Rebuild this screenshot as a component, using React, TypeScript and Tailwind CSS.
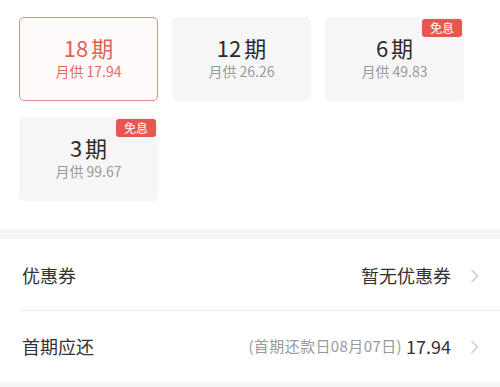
import React from "react";

const font = { fontFamily: '"Noto Sans CJK SC", "Noto Sans", sans-serif' };

function Chevron() {
  return (
    <svg width="9" height="14" viewBox="0 0 9 14" className="ml-[19px]">
      <polyline points="1.5,1 7.5,7 1.5,13" fill="none" stroke="#c8c8c8" strokeWidth="1.2" />
    </svg>
  );
}

type Plan = { n: string; m: string; free?: boolean; selected?: boolean };

const plans: Plan[] = [
  { n: "18", m: "17.94", selected: true },
  { n: "12", m: "26.26" },
  { n: "6", m: "49.83", free: true },
  { n: "3", m: "99.67", free: true },
];

function Card({ p }: { p: Plan }) {
  return (
    <div
      className={
        p.selected
          ? "relative h-[84px] rounded-[5px] border-[1.5px] border-[#e58a85] bg-[#fffafa] flex flex-col items-center justify-center pb-[3px]"
          : "relative h-[84px] rounded-[5px] bg-[#f6f6f6] flex flex-col items-center justify-center pb-[3px]"
      }
    >
      {p.free && (
        <div className="absolute right-[2px] top-[2px] h-[18px] w-[40px] rounded-[3px] bg-[#e8574f] text-white text-[12px] leading-[18px] text-center">
          免息
        </div>
      )}
      <div
        className={
          p.selected
            ? "text-[22px] leading-[26px] text-[#df5f59]"
            : "text-[22px] leading-[26px] text-[#2b2b2b]"
        }
      >
        {p.n}
        <span className="ml-[3px]">期</span>
      </div>
      <div
        className={
          p.selected
            ? "mt-[1px] text-[14px] leading-[21px] text-[#df6a64]"
            : "mt-[1px] text-[14px] leading-[21px] text-[#9a9a9a]"
        }
      >
        月供 {p.m}
      </div>
    </div>
  );
}

export default function App() {
  return (
    <div className="w-[500px] h-[387px] bg-white overflow-hidden" style={font}>
      <div className="pt-[17px] pl-[19px] pb-[28px]">
        <div className="grid grid-cols-[139px_139px_139px] gap-x-[14px] gap-y-[16px]">
          {plans.map((p) => (
            <Card key={p.n} p={p} />
          ))}
        </div>
      </div>
      <div className="h-[10px] bg-[#f5f5f5]" />
      <div className="h-[71px] flex items-center pl-[22px] pr-[21px] pt-[2px]">
        <div className="text-[18px] text-[#333]">优惠券</div>
        <div className="ml-auto text-[18px] text-[#333]">暂无优惠券</div>
        <Chevron />
      </div>
      <div className="ml-[20px] h-px bg-[#ececec]" />
      <div className="h-[71px] flex items-center pl-[22px] pr-[21px]">
        <div className="text-[18px] text-[#333]">首期应还</div>
        <div className="ml-auto flex items-center">
          <span className="text-[15px] tracking-[0.4px] text-[#9a9a9a]">(首期还款日08月07日)</span>
          <span className="ml-[4px] text-[18px] text-[#333]">17.94</span>
        </div>
        <Chevron />
      </div>
      <div className="h-[10px] bg-[#f5f5f5]" />
    </div>
  );
}
